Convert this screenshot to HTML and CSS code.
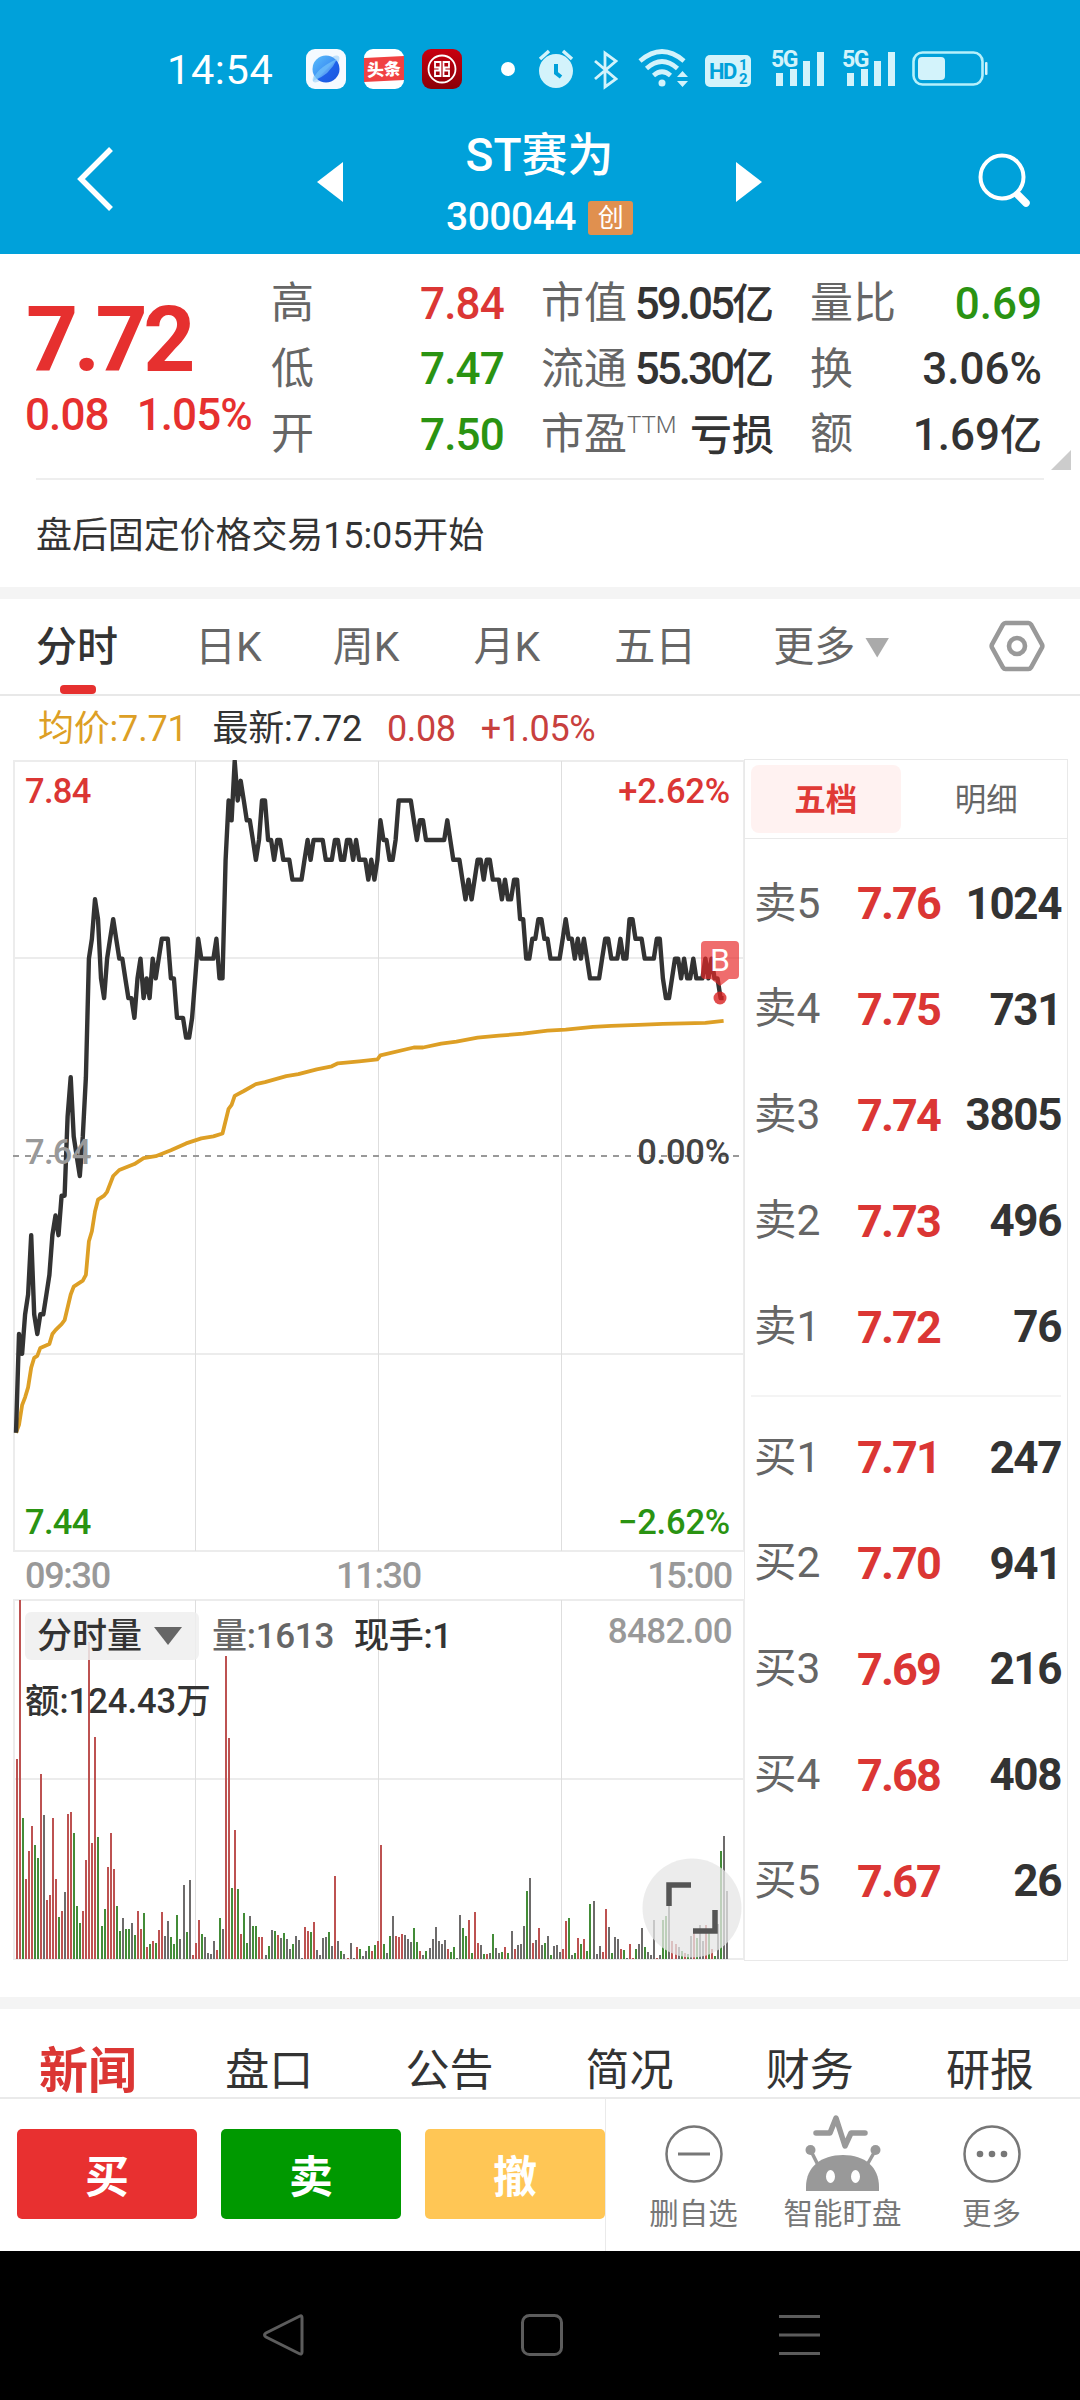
FILE: index.html
```html
<!DOCTYPE html>
<html lang="zh-CN">
<head>
  <meta charset="UTF-8" />
  <meta name="viewport" content="width=device-width, initial-scale=1" />
  <title>ST赛为 300044</title>
  <link rel="stylesheet" href="styles.css">
</head>
<body>
  <header class="header">
    <div class="status-bar">
      <span class="clock">14:54</span>
      <div class="apps">
        <svg width="40" height="40" viewBox="0 0 40 40">
          <defs>
            <linearGradient id="planet" x1="0" y1="0" x2="1" y2="1">
              <stop offset="0" stop-color="#5cc0fa" />
              <stop offset="0.5" stop-color="#3f93f5" />
              <stop offset="0.55" stop-color="#1f62ea" />
              <stop offset="1" stop-color="#1a55dd" />
            </linearGradient>
          </defs>
          <rect width="40" height="40" rx="9" fill="#f5faff" />
          <ellipse cx="20" cy="20" rx="18" ry="6" fill="#bfe0fb" transform="rotate(-45 20 20)" />
          <circle cx="20" cy="20" r="13.5" fill="url(#planet)" />
          <path d="M7 32 Q9 20 31 10 Q24 26 7 32Z" fill="#7fccfb" opacity="0.6" />
        </svg>
        <svg width="40" height="40" viewBox="0 0 40 40">
          <rect width="40" height="40" rx="9" fill="#fff" />
          <path d="M0 9 L40 7 V31 L0 33Z" fill="#f04142" />
          <text x="20" y="26.5" class="app-text" transform="rotate(-3 20 20)">头条</text>
        </svg>
        <svg width="40" height="40" viewBox="0 0 40 40">
          <defs>
            <linearGradient id="bank" x1="0" y1="0" x2="0" y2="1">
              <stop offset="0" stop-color="#c9000f" />
              <stop offset="1" stop-color="#8a0008" />
            </linearGradient>
          </defs>
          <rect width="40" height="40" rx="9" fill="url(#bank)" />
          <circle cx="20" cy="20" r="13.5" fill="none" stroke="#fff" stroke-width="1.8" />
          <path d="M18.500 13 H13 V18.500 H17.500 V21.500 H13 V27 H18.500Z M21.500 13 H27 V18.500 H22.500 V21.500 H27 V27 H21.500Z" fill="none" stroke="#fff" stroke-width="1.8" />
        </svg>
      </div>
      <span class="dot"></span>
      <svg class="sys-icons" width="452" height="44" viewBox="0 0 452 44">
        <!-- alarm -->
        <circle cx="18" cy="24" r="17" />
        <path d="M2 12 L11 4 M34 12 L25 4" class="ln" stroke-width="3.5" />
        <path d="M18 17 V26 L23 30" fill="none" stroke="#00a0d9" stroke-width="4" />
        <!-- bluetooth -->
        <path d="M57 14 L78 32 L67 40 V6 L78 14 L57 32" class="ln" stroke-width="2.8" />
        <!-- wifi -->
        <path d="M102 14 Q124 -5 146 14 M108.500 21.500 Q124 7.500 139.500 21.500 M115.500 28.500 Q124 21 132.500 28.500" class="ln" stroke-width="4.6" />
        <circle cx="124" cy="36" r="3.500" />
        <path d="M139 30 L144.500 24 L150 30Z M139 34 L144.500 40 L150 34Z" />
        <!-- hd -->
        <rect x="167" y="8" width="46" height="32" rx="5" />
        <text x="171" y="32" class="hd">HD</text>
        <text x="201" y="23" class="hd-num">1</text>
        <text x="201" y="37" class="hd-num">2</text>
        <!-- sim 1 -->
        <text x="233" y="20" class="net">5G</text>
        <path d="M238 26h7v13h-7z M252 22h7v17h-7z M265 14h7v25h-7z M279 5h7v34h-7z" />
        <!-- sim 2 -->
        <text x="304" y="20" class="net">5G</text>
        <path d="M309 26h7v13h-7z M323 22h7v17h-7z M336 14h7v25h-7z M350 5h7v34h-7z" />
        <!-- battery -->
        <rect x="375.500" y="5.500" width="69" height="32" rx="9" fill="none" stroke="#b5f0fb" stroke-width="2.6" />
        <rect x="380" y="10" width="27" height="23" rx="4" />
        <rect x="447" y="15" width="2.500" height="13" rx="1" />
      </svg>
    </div>
    <div class="title-bar">
      <svg class="back" width="40" height="68" viewBox="0 0 40 68">
        <path d="M37 3 L7 33 L37 63" fill="none" stroke="#fff" stroke-width="5.500" />
      </svg>
      <svg class="prev" width="26" height="40" viewBox="0 0 26 40"><path d="M26 0 V40 L0 20Z" fill="#fff" /></svg>
      <div class="stock">
        <div class="stock-name">ST赛为</div>
        <div class="stock-code">300044<span class="badge">创</span></div>
      </div>
      <svg class="next" width="26" height="40" viewBox="0 0 26 40"><path d="M0 0 V40 L26 20Z" fill="#fff" /></svg>
      <svg class="search" width="54" height="56" viewBox="0 0 54 56">
        <circle cx="24" cy="25" r="21.500" fill="none" stroke="#fff" stroke-width="4" />
        <path d="M40 43 L48 51" stroke="#fff" stroke-width="7.500" stroke-linecap="round" />
      </svg>
    </div>
  </header>

  <section class="quote">
    <div class="price-box">
      <div class="price">7.72</div>
      <div class="change"><span>0.08</span><span>1.05%</span></div>
    </div>
    <dl class="stats stats-1">
      <div><dt>高</dt><dd class="red">7.84</dd></div>
      <div><dt>低</dt><dd class="green">7.47</dd></div>
      <div><dt>开</dt><dd class="green">7.50</dd></div>
    </dl>
    <dl class="stats stats-2">
      <div><dt>市值</dt><dd>59.05<b>亿</b></dd></div>
      <div><dt>流通</dt><dd>55.30<b>亿</b></dd></div>
      <div><dt>市盈<sup>TTM</sup></dt><dd><b>亏损</b></dd></div>
    </dl>
    <dl class="stats stats-3">
      <div><dt>量比</dt><dd class="green">0.69</dd></div>
      <div><dt>换</dt><dd>3.06%</dd></div>
      <div><dt>额</dt><dd>1.69<b>亿</b></dd></div>
    </dl>
    <span class="corner"></span>
  </section>
  <div class="notice">盘后固定价格交易15:05开始</div>

  <nav class="period-tabs">
    <span class="tab active">分时</span>
    <span class="tab">日K</span>
    <span class="tab">周K</span>
    <span class="tab">月K</span>
    <span class="tab">五日</span>
    <span class="tab more">更多<i class="arrow"></i></span>
    <svg class="setting" width="56" height="52" viewBox="0 0 56 52">
      <path d="M16.500 3 H39.500 Q41 3 42 4.500 L53 24.500 Q53.700 26 53 27.500 L42 47.500 Q41 49 39.500 49 H16.500 Q15 49 14 47.500 L3 27.500 Q2.300 26 3 24.500 L14 4.500 Q15 3 16.500 3Z" fill="none" stroke="#999" stroke-width="4.600" />
      <circle cx="28" cy="26" r="8" fill="none" stroke="#999" stroke-width="4.600" />
    </svg>
  </nav>

  <div class="info-line">
    <span class="avg">均价:7.71</span>
    <span class="last">最新:7.72</span>
    <span class="diff">0.08</span>
    <span class="pct">+1.05%</span>
  </div>

  <main class="board">
    <div class="charts">
      <svg class="price-chart" width="732" height="794" viewBox="0 0 732 794">
        <path class="grid" d="M1 1 H731 V791 H1Z M1 198 H731 M1 594 H731" />
        <path class="grid thin" d="M182.500 1 V791 M365.500 1 V791 M548.500 1 V791" />
        <path class="mid" d="M0 396 H731" />
        <polyline id="avgLine" class="avg-line" />
        <polyline id="priceLine" class="price-line" />
        <text x="12" y="43" class="lbl red">7.84</text>
        <text x="717" y="43" class="lbl red end">+2.62%</text>
        <text x="12" y="404" class="lbl mid-lbl">7.64</text>
        <text x="717" y="404" class="lbl end zero">0.00%</text>
        <text x="12" y="774" class="lbl green">7.44</text>
        <text x="717" y="774" class="lbl green end">−2.62%</text>
        <rect x="688" y="181" width="38" height="38" rx="4" class="buy-mark" />
        <path d="M698 219 H716 L707 226Z" class="buy-mark" />
        <circle cx="707" cy="238" r="6.500" class="buy-mark dark" />
        <text x="707" y="211" class="buy-text">B</text>
      </svg>
      <div class="times"><span>09:30</span><span>11:30</span><span>15:00</span></div>
      <div class="volume">
        <svg width="732" height="362" viewBox="0 0 732 362">
          <path class="grid" d="M1 1 H731 V360 H1Z M1 180 H731" />
          <path class="grid thin" d="M182.500 1 V360 M365.500 1 V360 M548.500 1 V360" />
          <g id="bars"></g>
        </svg>
        <div class="vol-head">
          <span class="vol-select">分时量<i class="arrow"></i></span>
          <span class="vol-num">量:1613</span>
          <span class="vol-hand">现手:1</span>
          <span class="vol-max">8482.00</span>
        </div>
        <div class="vol-amount">额:124.43万</div>
        <svg class="expand" width="100" height="100" viewBox="0 0 100 100">
          <circle cx="50" cy="50" r="49.500" fill="#e6e6e6" opacity="0.75" />
          <path d="M27 48 V27 H49 M73 52 V73 H51" fill="none" stroke="#555" stroke-width="5.500" />
        </svg>
      </div>
    </div>

    <aside class="depth">
      <div class="depth-tabs"><span class="on">五档</span><span>明细</span></div>
      <ul class="orders">
        <li><span>卖5</span><b>7.76</b><em>1024</em></li>
        <li><span>卖4</span><b>7.75</b><em>731</em></li>
        <li><span>卖3</span><b>7.74</b><em>3805</em></li>
        <li><span>卖2</span><b>7.73</b><em>496</em></li>
        <li><span>卖1</span><b>7.72</b><em>76</em></li>
      </ul>
      <ul class="orders buys">
        <li><span>买1</span><b>7.71</b><em>247</em></li>
        <li><span>买2</span><b>7.70</b><em>941</em></li>
        <li><span>买3</span><b>7.69</b><em>216</em></li>
        <li><span>买4</span><b>7.68</b><em>408</em></li>
        <li><span>买5</span><b>7.67</b><em>26</em></li>
      </ul>
    </aside>
  </main>

  <nav class="news-tabs">
    <span class="active">新闻</span>
    <span>盘口</span>
    <span>公告</span>
    <span>简况</span>
    <span>财务</span>
    <span>研报</span>
  </nav>

  <footer class="actions">
    <div class="trade">
      <button class="btn buy">买</button>
      <button class="btn sell">卖</button>
      <button class="btn cancel">撤</button>
    </div>
    <div class="tools">
      <div class="tool">
        <svg width="58" height="80" viewBox="0 0 58 80">
          <circle cx="29" cy="43" r="27.500" fill="none" stroke="#777" stroke-width="2.500" />
          <path d="M13 43 H45" stroke="#777" stroke-width="3" />
        </svg>
        <span>删自选</span>
      </div>
      <div class="tool">
        <svg width="76" height="80" viewBox="0 0 76 80" fill="#999">
          <path d="M11 22 H25 L31 7 L40 35 L46 22 H60" fill="none" stroke="#999" stroke-width="5.500" stroke-linecap="round" stroke-linejoin="round" />
          <path d="M1 80 V76 C1 56 16 44 38 44 C60 44 74 56 74 76 V80Z" />
          <circle cx="5.500" cy="39" r="5" />
          <circle cx="70.500" cy="39" r="5" />
          <path d="M6 40 L13 54 M70 40 L62 54" stroke="#999" stroke-width="3.500" />
          <ellipse cx="25.500" cy="65.500" rx="4.500" ry="6.500" fill="#fff" />
          <ellipse cx="50.500" cy="65.500" rx="4.500" ry="6.500" fill="#fff" />
        </svg>
        <span>智能盯盘</span>
      </div>
      <div class="tool">
        <svg width="58" height="80" viewBox="0 0 58 80">
          <circle cx="29" cy="43" r="27.500" fill="none" stroke="#777" stroke-width="2.500" />
          <g fill="#777"><circle cx="17" cy="43" r="3.300" /><circle cx="29" cy="43" r="3.300" /><circle cx="41" cy="43" r="3.300" /></g>
        </svg>
        <span>更多</span>
      </div>
    </div>
  </footer>

  <div class="sys-nav">
    <svg width="42" height="42" viewBox="0 0 42 42"><path d="M38 2 Q40 1 40 4 V38 Q40 41 37 39.500 L4 23 Q1 21 4 19Z" /></svg>
    <svg width="42" height="42" viewBox="0 0 42 42"><rect x="1.500" y="1.500" width="39" height="39" rx="7" /></svg>
    <svg width="42" height="42" viewBox="0 0 42 42"><path d="M0 2.500 H41 M0 21 H41 M0 39.500 H41" /></svg>
  </div>

  <script src="script.js"></script>
</body>
</html>
```
FILE: styles.css
```css
* {
  box-sizing: border-box;
}

body {
  margin: 0;
  width: 1080px;
  height: 2400px;
  overflow: hidden;
  background: #fff;
  color: #333;
  font-family: Roboto, "Noto Sans CJK SC", sans-serif;
  line-height: 1;
}

svg {
  display: block;
  flex: none;
}

ul, dl, dd {
  margin: 0;
  padding: 0;
  list-style: none;
}

span, dt, dd {
  white-space: nowrap;
}

.red {
  color: #db3634;
  fill: #db3634;
}

.green {
  color: #2a9312;
  fill: #2a9312;
}

/* header */
.header {
  height: 254px;
  background: #00a1da;
  color: #fff;
}

.status-bar {
  display: flex;
  align-items: center;
  height: 92px;
  padding: 46px 0 0 167px;
}

.clock {
  width: 139px;
  padding-top: 2px;
  font-size: 41.5px;
  letter-spacing: 0.6px;
}

.apps {
  display: flex;
  gap: 18px;
}

.app-text {
  font-size: 17px;
  font-weight: 900;
  fill: #fff;
  text-anchor: middle;
}

.dot {
  width: 14px;
  height: 14px;
  margin: 0 23px 0 39px;
  border-radius: 50%;
  background: #fff;
}

.sys-icons {
  fill: #d3f3fb;
}

.sys-icons .ln {
  fill: none;
  stroke: #d3f3fb;
}

.hd {
  font-size: 22px;
  font-weight: 700;
  letter-spacing: -1.5px;
  fill: #00a1da;
}

.hd-num {
  font-size: 15px;
  font-weight: 700;
  fill: #00a1da;
}

.net {
  font-size: 23px;
  font-weight: 700;
  letter-spacing: -1.5px;
}

.title-bar {
  display: flex;
  align-items: center;
  height: 162px;
  padding: 14px 48px 0 74px;
}

.prev {
  margin: 4px 0 0 203px;
}

.next {
  margin: 4px 0 0;
}

.stock {
  width: 393px;
  padding-top: 13px;
  text-align: center;
}

.stock-name {
  font-size: 46px;
  font-weight: 500;
  line-height: 62px;
}

.stock-code {
  display: flex;
  justify-content: center;
  align-items: center;
  gap: 12px;
  height: 64px;
  font-size: 39px;
  font-weight: 500;
  letter-spacing: -0.5px;
}

.badge {
  width: 45px;
  height: 34px;
  border-radius: 3px;
  background: #e0904f;
  font-size: 26px;
  font-weight: 400;
  line-height: 34px;
}

.search {
  margin-left: auto;
}

/* quote */
.quote {
  position: relative;
  display: flex;
  height: 226px;
  margin: 0 36px;
  padding-top: 17px;
  border-bottom: 2px solid #eee;
}

.price-box {
  width: 235px;
  margin-left: -10px;
  padding-top: 21px;
  color: #e6302f;
}

.price {
  height: 96px;
  font-size: 91px;
  font-weight: 700;
  line-height: 96px;
  letter-spacing: -4.5px;
}

.change {
  display: flex;
  gap: 28px;
  margin: 3px 0 0 -1px;
  font-size: 44px;
  font-weight: 500;
  line-height: 48px;
  letter-spacing: -0.9px;
}

.stats > div {
  display: flex;
  justify-content: space-between;
  align-items: center;
  height: 65.5px;
}

.stats dt {
  font-size: 43px;
  color: #666;
}

.stats dd {
  font-size: 44px;
  font-weight: 500;
  letter-spacing: -0.8px;
}

.stats b {
  font-size: 42px;
  font-weight: 500;
  letter-spacing: 0;
}

.stats sup {
  font-size: 24px;
  font-weight: 300;
  line-height: 0;
  vertical-align: 16px;
}

.stats-1 {
  width: 233px;
  margin-left: 10px;
}

.stats-2 {
  width: 233px;
  margin-left: 37px;
}

.stats-2 dd {
  letter-spacing: -3px;
}

.stats-3 {
  width: 232px;
  margin-left: 36px;
}

.stats-3 dd {
  letter-spacing: 0;
}

.corner {
  position: absolute;
  right: -27px;
  bottom: 8px;
  width: 20px;
  height: 20px;
  background: #ccc;
  clip-path: polygon(100% 0, 100% 100%, 0 100%);
}

.notice {
  height: 119px;
  padding-left: 36px;
  border-bottom: 12px solid #f4f4f4;
  font-size: 36px;
  line-height: 112px;
  letter-spacing: -0.1px;
}

/* period tabs */
.period-tabs {
  display: flex;
  align-items: center;
  height: 97px;
  padding: 2px 35px 0 36px;
  border-bottom: 2px solid #e8e8e8;
  font-size: 41px;
  color: #666;
}

.tab {
  margin-right: 77px;
}

.tab:nth-child(2) {
  margin-right: 71px;
}

.tab:nth-child(3) {
  margin-right: 74px;
}

.tab:nth-child(4) {
  margin-right: 74px;
}

.tab.active {
  position: relative;
  font-weight: 500;
  color: #333;
}

.tab.active::after {
  content: "";
  position: absolute;
  left: 24px;
  top: 58px;
  width: 36px;
  height: 9px;
  border-radius: 4px;
  background: #e6302f;
}

.tab.more {
  display: flex;
  align-items: center;
  margin-right: auto;
}

.arrow {
  width: 24px;
  height: 20px;
  margin-left: 10px;
  background: #aaa;
  clip-path: polygon(0 0, 100% 0, 50% 100%);
}

.setting {
  margin-top: -3px;
}

.info-line {
  display: flex;
  height: 63px;
  padding-left: 38px;
  font-size: 36px;
  line-height: 66px;
  letter-spacing: -0.2px;
}

.info-line span {
  margin-right: 25px;
}

.info-line .avg {
  color: #dd9f25;
}

.info-line .diff,
.info-line .pct {
  color: #c8403e;
  letter-spacing: -0.4px;
}

/* charts */
.board {
  display: flex;
  padding: 0 12px 0 13px;
  border-bottom: 12px solid #f4f4f4;
  height: 1250px;
}

.charts {
  width: 731px;
  padding-top: 1px;
}

.grid {
  fill: none;
  stroke: #ececec;
  stroke-width: 2;
}

.grid.thin {
  stroke: #dedede;
  stroke-width: 1;
}

.mid {
  stroke: #999;
  stroke-width: 2;
  stroke-dasharray: 6 6;
}

.price-line,
.avg-line {
  fill: none;
  stroke-linejoin: round;
  stroke: #333;
  stroke-width: 4.4;
}

.avg-line {
  stroke: #dd9f25;
  stroke-width: 3.8;
}

.lbl {
  font-size: 34.5px;
  font-weight: 500;
  letter-spacing: -0.7px;
}

.end {
  text-anchor: end;
  letter-spacing: -0.2px;
}

.mid-lbl {
  fill: #999;
}

.zero {
  fill: #444;
}

.buy-mark {
  fill: #e82828;
  opacity: 0.68;
}

.buy-mark.dark {
  fill: #d82020;
  opacity: 0.8;
}

.buy-text {
  font-size: 32px;
  text-anchor: middle;
  fill: #fff;
}

.times {
  display: flex;
  justify-content: space-between;
  height: 45px;
  padding: 0 12px;
  font-size: 36px;
  font-weight: 500;
  line-height: 45px;
  color: #999;
  letter-spacing: -1.3px;
}

.volume {
  position: relative;
}

.bar-r {
  fill: #bd5251;
}

.bar-g {
  fill: #438c38;
}

.bar-k {
  fill: #6d6b6b;
}

.vol-head {
  position: absolute;
  left: 12px;
  right: 12px;
  top: 13px;
  display: flex;
  align-items: center;
  height: 48px;
  font-size: 35px;
  font-weight: 500;
}

.vol-select {
  display: flex;
  align-items: center;
  width: 174px;
  height: 48px;
  padding-left: 12px;
  border-radius: 6px;
  background: rgba(238, 238, 238, 0.85);
}

.vol-select .arrow {
  width: 28px;
  height: 18px;
  margin-left: 12px;
  background: #666;
}

.vol-num {
  margin-left: 13px;
  color: #666;
  letter-spacing: -0.3px;
}

.vol-hand {
  margin-left: 20px;
  letter-spacing: -0.3px;
}

.vol-max {
  margin-left: auto;
  padding-bottom: 10px;
  color: #999;
  letter-spacing: -0.7px;
}

.vol-amount {
  position: absolute;
  left: 12px;
  top: 85px;
  font-size: 34.5px;
  font-weight: 500;
}

.expand {
  position: absolute;
  left: 629px;
  top: 259px;
}

/* order book */
.depth {
  width: 324px;
  height: 1202px;
  border: 1px solid #e9e9e9;
  font-size: 42.5px;
}

.depth-tabs {
  display: flex;
  gap: 11px;
  height: 79px;
  padding: 5px 6px;
  border-bottom: 1px solid #e9e9e9;
  font-size: 31.5px;
  color: #666;
}

.depth-tabs span {
  flex: 1;
  border-radius: 8px;
  line-height: 72px;
  text-align: center;
}

.depth-tabs .on {
  background: #fff2f1;
  font-weight: 700;
  color: #e03a36;
}

.orders {
  margin: 0 6px;
  padding: 12px 0 15px 3px;
}

.orders.buys {
  padding-top: 8px;
  border-top: 2px solid #f4f4f4;
}

.orders li {
  display: grid;
  grid-template-columns: 103px 80px 1fr;
  align-items: center;
  height: 105.8px;
}

.orders span {
  color: #666;
}

.orders b,
.orders em {
  font-size: 45px;
  font-style: normal;
  font-weight: 700;
  letter-spacing: -1.9px;
}

.orders b {
  color: #db3634;
}

.orders em {
  font-size: 44px;
  text-align: right;
  letter-spacing: -1.4px;
}

/* bottom */
.news-tabs {
  display: flex;
  justify-content: space-between;
  align-items: center;
  height: 90px;
  padding: 36px 46px 0 39px;
  border-bottom: 2px solid #eaeaea;
  font-size: 44px;
}

.news-tabs .active {
  margin-right: -4px;
  font-size: 49px;
  font-weight: 700;
  color: #db3634;
}

.actions {
  display: flex;
  height: 152px;
}

.trade {
  display: flex;
  gap: 24px;
  width: 606px;
  padding: 30px 0 0 17px;
  border-right: 1px solid #eaeaea;
}

.btn {
  width: 180px;
  height: 90px;
  padding: 0;
  border: none;
  border-radius: 5px;
  color: #fff;
  font-family: inherit;
  font-size: 44px;
  font-weight: 700;
}

.buy {
  background: #e83030;
}

.sell {
  background: #009900;
}

.cancel {
  background: #ffc655;
}

.tools {
  display: grid;
  grid-template-columns: repeat(3, 149px);
  padding: 12px 0 0 13px;
  font-size: 29.5px;
  color: #777;
}

.tool {
  display: flex;
  flex-direction: column;
  align-items: center;
  gap: 9px;
}

.sys-nav {
  display: flex;
  justify-content: space-between;
  height: 149px;
  padding: 63px 259px 0 262px;
  background: #000;
}

.sys-nav svg {
  fill: none;
  stroke: #5c5c5c;
  stroke-width: 3;
}
```
FILE: script.js
```js
// price per minute, in cents above 7.00
const prices = [
  50, 55, 54, 56, 57, 60, 56, 55, 56, 56, 57, 58, 60, 61, 60, 62, 62, 66, 68, 65,
  64, 63, 65, 68, 74, 75, 77, 76, 73, 72, 74, 75, 76, 75, 74, 74, 73, 72, 72, 71,
  73, 74, 72, 73, 72, 74, 73, 74, 75, 75, 75, 73, 73, 71, 71, 71, 70, 70, 71, 73,
  75, 74, 74, 74, 74, 74, 75, 73, 73, 79, 82, 81, 84, 82, 83, 82, 81, 81, 80, 79,
  80, 82, 82, 80, 80, 79, 80, 80, 79, 79, 79, 78, 78, 78, 78, 79, 80, 79, 80, 80,
  80, 80, 79, 79, 79, 80, 80, 79, 79, 80, 80, 79, 80, 79, 79, 79, 78, 79, 78, 79,
  81, 80, 80, 79, 79, 80, 82, 82, 82, 82, 82, 81, 80, 81, 81, 80, 80, 80, 80, 80,
  80, 80, 81, 80, 79, 79, 79, 78, 77, 78, 77, 78, 79, 79, 78, 79, 79, 78, 78, 78,
  77, 78, 77, 77, 78, 78, 76, 76, 74, 74, 75, 75, 76, 76, 75, 75, 74, 74, 74, 74,
  75, 76, 75, 75, 74, 75, 74, 75, 74, 73, 73, 73, 73, 74, 75, 75, 74, 74, 74, 75,
  74, 74, 76, 76, 75, 75, 75, 74, 74, 74, 74, 75, 75, 73, 72, 72, 73, 74, 74, 73,
  74, 73, 73, 74, 73, 73, 73, 74, 73, 74, 73, 73, 72, 72
];

// average price: [minute, cents]
const average = [
  [0, 50], [1, 50.4], [2, 51.4], [3, 51.8], [4, 52.3], [5, 53.3], [6, 53.8], [7, 53.9],
  [8, 54.3], [11, 54.5], [12, 55], [13, 55.2], [15, 55.5], [16, 55.7], [18, 57], [19, 57.4],
  [22, 57.7], [23, 58], [24, 59.7], [25, 60.2], [26, 61.2], [27, 61.8], [29, 62], [30, 62.2],
  [32, 63], [34, 63.3], [39, 63.6], [42, 63.9], [46, 64], [51, 64.3], [56, 64.65], [59, 64.8],
  [61, 64.9], [65, 65], [68, 65.15], [70, 66.4], [71, 66.6], [72, 67.05], [75, 67.3], [79, 67.65],
  [82, 67.75], [89, 68.05], [93, 68.15], [99, 68.4], [104, 68.55], [106, 68.7], [113, 68.8],
  [119, 68.9], [120, 69.1], [131, 69.5], [134, 69.5], [140, 69.7], [145, 69.8], [152, 70],
  [159, 70.1], [167, 70.2], [175, 70.35], [181, 70.4], [190, 70.55], [196, 70.6], [205, 70.65],
  [213, 70.7], [227, 70.75], [233, 70.85]
];

// volume bars: height and colour (r up, g down, k flat)
const volumes = `200r 359r 141g 80r 108r 133r 114g 101g 185r 144k 59r 64r 141r 80r 42g 48r 67k 145r 147r 126g
53g 36g 48r 99r 317r 116r 222r 122g 33g 50g 92r 126r 90r 53g 28g 41k 30g 30g 36k 24g
48r 30r 46g 12r 15g 18r 16g 29r 47r 23k 38k 22g 15g 44g 20k 74k 27g 79k 4r 16r
39r 25g 22k 6k 5k 18k 9r 41g 30k 303r 221r 71g 129r 70g 25r 46g 16g 43k 33g 33g
22r 22r 4k 13g 29k 28g 24r 21k 26g 20k 10k 15g 23k 19k 1k 32r 28r 27g 37r 9k
4k 21k 22k 27g 13k 83r 18k 8g 5k 1r 16k 1k 12r 10g 3k 8k 13g 8r 14g 18r
114r 15g 6k 23g 43k 23r 22r 25r 24k 20k 17k 31g 17g 8r 4k 8g 11k 20k 32k 18k
15k 19k 10r 7g 12g 1k 44k 31g 23g 39r 6g 47r 16r 14k 5g 5r 6k 25g 11k 6k
7g 12r 6g 28k 10r 14k 15k 33k 68g 81k 16r 19k 31r 14k 16g 23k 4g 13k 14k 7k
10r 38r 41g 4k 6g 21r 15g 20r 8g 55g 58k 5k 13k 7r 50r 32k 6g 22k 20k 10r
9g 1k 15r 1r 10g 15k 31k 12g 7k 4k 39k 1r 4k 39g 43g 53k 18r 15r 12k 8g
6r 5g 23k 28r 21g 34k 18k 34r 30g 10r 3g 35k 108g 123k 68k`.split(/\s+/);

const STEP = 3.037;
const minuteX = i => 3 + i * STEP;
const centY = c => 1 + (84 - c) * 19.76;
const toPoints = list => list.map(([i, c]) => minuteX(i).toFixed(1) + "," + centY(c).toFixed(1)).join(" ");

document.getElementById("priceLine").setAttribute("points", toPoints(prices.map((c, i) => [i, c])));
document.getElementById("avgLine").setAttribute("points", toPoints(average));

document.getElementById("bars").innerHTML = volumes.map((v, i) => {
  const h = parseInt(v);
  return `<rect class="bar-${v.slice(-1)}" x="${Math.round(minuteX(i) - 0.5)}" y="${360 - h}" width="2" height="${h}" />`;
}).join("");
```
